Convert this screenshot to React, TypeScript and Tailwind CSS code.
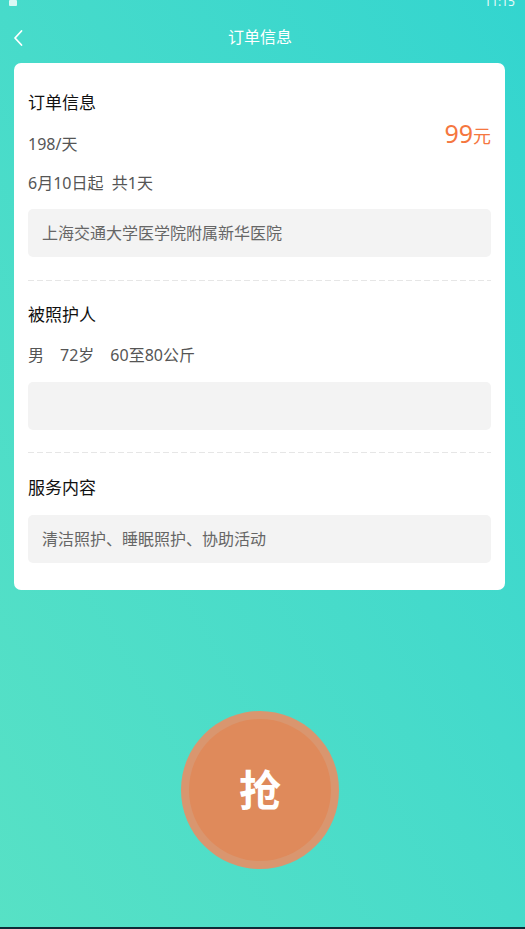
import React from "react";

const font = { fontFamily: '"Noto Sans", "Noto Sans CJK SC", sans-serif' };

function Dashed() {
  return (
    <div className="h-[1px] bg-[repeating-linear-gradient(90deg,#e6e6e6_0px,#e6e6e6_6px,transparent_6px,transparent_9px)]" />
  );
}

export default function App() {
  return (
    <div
      className="relative w-[525px] h-[929px] overflow-hidden flex flex-col bg-linear-to-tr from-[#57e1c5] to-[#33d5cf]"
      style={font}
    >
      {/* status bar (cut off at top) */}
      <div className="h-[8px] overflow-hidden flex items-end justify-between pl-[9px] pr-[10px]">
        <div className="w-[8px] h-[6px] bg-white/80 rounded-[1px] mb-[2px]" />
        <div className="text-white/90 text-[12px] leading-[12px]">11:15</div>
      </div>

      {/* header */}
      <div className="relative h-[55px] flex items-center justify-center pt-[3px] pr-[5px]">
        <svg
          className="absolute left-[12px] top-[21px]"
          width="14"
          height="18"
          viewBox="0 0 14 18"
          fill="none"
        >
          <path d="M9.5 2 L3 9 L9.5 16" stroke="white" strokeWidth="1.8" strokeLinecap="round" strokeLinejoin="round" />
        </svg>
        <span className="text-white text-[16px]">订单信息</span>
      </div>

      {/* card */}
      <div className="ml-[14px] mr-[20px] bg-white rounded-[7px] px-[14px] pt-[28px] pb-[27px]">
        {/* section 1 */}
        <div className="flex">
          <div className="flex-1 flex flex-col">
            <div className="h-[24px] leading-[24px] text-[17px] text-[#111]">订单信息</div>
            <div className="mt-[17px] h-[24px] leading-[24px] text-[16px] text-[#555]">198/天</div>
            <div className="mt-[15px] h-[24px] leading-[24px] text-[16px] text-[#555]">6月10日起&nbsp;&nbsp;共1天</div>
          </div>
          <div className="mt-[26px] h-[32px] flex items-baseline text-[#f5773f]">
            <span className="text-[25px] leading-[32px]">99</span>
            <span className="text-[18px]">元</span>
          </div>
        </div>
        <div className="mt-[14px] h-[48px] rounded-[5px] bg-[#f3f3f3] flex items-center px-[14px] text-[16px] text-[#666]">
          上海交通大学医学院附属新华医院
        </div>
        <div className="mt-[23px]">
          <Dashed />
        </div>

        {/* section 2 */}
        <div className="mt-[22px] h-[24px] leading-[24px] text-[17px] text-[#111]">被照护人</div>
        <div className="mt-[16px] h-[24px] leading-[24px] text-[16px] text-[#555] flex gap-[16px]">
          <span>男</span>
          <span>72岁</span>
          <span>60至80公斤</span>
        </div>
        <div className="mt-[15px] h-[48px] rounded-[5px] bg-[#f3f3f3]" />
        <div className="mt-[22px]">
          <Dashed />
        </div>

        {/* section 3 */}
        <div className="mt-[23px] h-[24px] leading-[24px] text-[17px] text-[#111]">服务内容</div>
        <div className="mt-[15px] h-[48px] rounded-[5px] bg-[#f3f3f3] flex items-center px-[14px] text-[16px] text-[#666]">
          清洁照护、睡眠照护、协助活动
        </div>
      </div>

      {/* grab button */}
      <div className="flex-1 flex items-end justify-center pb-[58px] pr-[5px]">
        <div className="w-[158px] h-[158px] rounded-full bg-[#d9966f] flex items-center justify-center">
          <div className="w-[142px] h-[142px] rounded-full bg-[#df8a5b] flex items-center justify-center">
            <span className="text-white text-[42px] font-bold leading-none">抢</span>
          </div>
        </div>
      </div>

      <div className="h-[2px] bg-[#0e2a36]" />
    </div>
  );
}
